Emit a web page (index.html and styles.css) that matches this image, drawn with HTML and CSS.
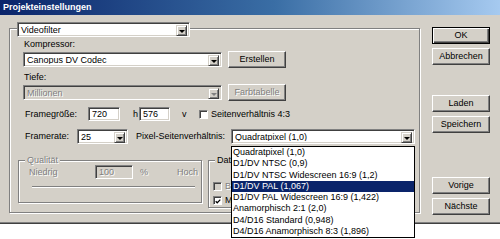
FILE: index.html
```html
<!DOCTYPE html>
<html lang="de">
<head>
<meta charset="utf-8">
<title>Projekteinstellungen</title>
<link rel="stylesheet" href="styles.css">
</head>
<body>
<div class="dialog">
  <div class="titlebar">Projekteinstellungen</div>
  <div class="content">
    <div class="maingroup">
      <div class="select head"><span class="val">Videofilter</span><span class="arrow"><i class="tri"></i></span></div>
      <div class="lbl lbl-komp">Kompressor:</div>
      <div class="row r1">
        <div class="select w199"><span class="val">Canopus DV Codec</span><span class="arrow"><i class="tri"></i></span></div>
        <div class="btn ml6">Erstellen</div>
      </div>
      <div class="lbl lbl-tiefe">Tiefe:</div>
      <div class="row r2">
        <div class="select w199 disabled"><span class="val dis">Millionen</span><span class="arrow"><i class="tri gray"></i></span></div>
        <div class="btn ml6 dis">Farbtabelle</div>
      </div>
      <div class="row r3">
        <span class="cap c-fg">Framegröße:</span>
        <span class="field w32">720</span>
        <span class="cap c-h">h</span>
        <span class="field w31 ml1">576</span>
        <span class="cap c-v">v</span>
        <span class="check c-seit"></span>
        <span class="cap c-seittext">Seitenverhältnis 4:3</span>
      </div>
      <div class="row r4">
        <span class="cap c-fr">Framerate:</span>
        <div class="select w51"><span class="val">25</span><span class="arrow"><i class="tri"></i></span></div>
        <span class="cap c-px">Pixel-Seitenverhältnis:</span>
        <div class="select w184"><span class="val">Quadratpixel (1,0)</span><span class="arrow"><i class="tri"></i></span></div>
      </div>
      <div class="groups">
        <div class="grp qual">
          <span class="legend dis">Qualität</span>
          <div class="row qrow">
            <span class="cap dis c-nied">Niedrig</span>
            <span class="field w38 fdis dis">100</span>
            <span class="cap dis c-pct">%</span>
            <span class="cap dis c-hoch">Hoch</span>
          </div>
          <div class="slider"></div>
        </div>
        <div class="grp dat">
          <span class="legend">Dat</span>
          <div class="row crow1"><span class="check cdis"></span><span class="cap dis c-cb">B</span></div>
          <div class="row crow2"><span class="check"><svg viewBox="0 0 7 7" width="7" height="7"><polyline points="0.8,3.2 2.6,5 6.2,1.4" fill="none" stroke="#000" stroke-width="1.4"/></svg></span><span class="cap c-cb">M</span></div>
        </div>
      </div>
    </div>
    <div class="buttons">
      <div class="btn default">OK</div>
      <div class="btn b-abb">Abbrechen</div>
      <div class="btn b-laden">Laden</div>
      <div class="btn b-spei">Speichern</div>
      <div class="btn b-vor">Vorige</div>
      <div class="btn b-nae">Nächste</div>
    </div>
  </div>
  <ul class="listbox">
    <li>Quadratpixel (1,0)</li>
    <li>D1/DV NTSC (0,9)</li>
    <li>D1/DV NTSC Widescreen 16:9 (1,2)</li>
    <li class="sel">D1/DV PAL (1,067)</li>
    <li>D1/DV PAL Widescreen 16:9 (1,422)</li>
    <li>Anamorphisch 2:1 (2,0)</li>
    <li>D4/D16 Standard (0,948)</li>
    <li>D4/D16 Anamorphisch 8:3 (1,896)</li>
  </ul>
</div>
</body>
</html>
```

FILE: styles.css
```css
html, body {
  margin: 0;
  padding: 0;
  background: #ffffff;
}
body {
  height: 239px;
  font-family: "Liberation Sans", Arial, sans-serif;
  font-size: 9px;
  color: #000;
}
.dialog {
  position: relative;
  width: 500px;
  height: 222px;
  background: #d4d0c8;
  border-bottom: 1px solid #808080;
  box-shadow: 0 1px 0 #404040;
}
.titlebar {
  height: 15px;
  line-height: 15px;
  padding-left: 3px;
  background: linear-gradient(to right, #0a246a, #3a6ea5 55%, #a6caf0);
  color: #fff;
  font-weight: bold;
  font-size: 9px;
}
.content {
  display: flex;
  align-items: flex-start;
}
.maingroup {
  box-sizing: border-box;
  margin: 13px 0 0 9px;
  width: 411px;
  height: 185px;
  border: 1px solid #808080;
  box-shadow: inset 1px 1px #fff, 1px 1px #fff;
  padding-left: 13px;
}
.select {
  box-sizing: border-box;
  display: flex;
  height: 15px;
  background: #fff;
  border: 1px solid;
  border-color: #808080 #fff #fff #808080;
  box-shadow: inset 1px 1px #404040, inset -1px -1px #d4d0c8;
  padding: 2px;
}
.select.disabled { background: #d4d0c8; }
.select .val {
  flex: 1;
  line-height: 11px;
  padding-left: 1px;
  white-space: nowrap;
  overflow: hidden;
}
.select .arrow {
  box-sizing: border-box;
  width: 11px;
  height: 11px;
  background: #d4d0c8;
  border: 1px solid;
  border-color: #d4d0c8 #404040 #404040 #d4d0c8;
  box-shadow: inset 1px 1px #fff, inset -1px -1px #808080;
  display: flex;
  align-items: center;
  justify-content: center;
}
.tri {
  display: block;
  width: 0;
  height: 0;
  border-left: 3px solid transparent;
  border-right: 3px solid transparent;
  border-top: 3px solid #000;
  margin-top: 1px;
}
.tri.gray { border-top-color: #808080; }
.head { margin: -7px 0 0 -6px; width: 173px; }
.w199 { width: 199px; }
.w51 { width: 51px; }
.w184 { width: 184px; }
.lbl { line-height: 11px; padding-left: 1px; }
.lbl-komp { margin-top: 2px; }
.lbl-tiefe { margin-top: 4px; }
.row { display: flex; align-items: center; }
.r1 { margin-top: 1px; }
.r2 { margin-top: 1px; }
.r3 { margin-top: 6px; height: 14px; }
.r4 { margin-top: 8px; height: 15px; }
.btn {
  box-sizing: border-box;
  width: 58px;
  height: 17px;
  line-height: 15px;
  text-align: center;
  background: #d4d0c8;
  border: 1px solid;
  border-color: #fff #404040 #404040 #fff;
  box-shadow: inset -1px -1px #808080;
  white-space: nowrap;
}
.btn.default {
  border-color: #000;
  box-shadow: inset 1px 1px #fff, inset -1px -1px #404040, inset -2px -2px #808080;
}
.ml6 { margin-left: 6px; }
.ml1 { margin-left: 1px; }
.dis { color: #808080; text-shadow: 1px 1px #fff; }
.cap { line-height: 11px; white-space: nowrap; }
.field {
  box-sizing: border-box;
  height: 14px;
  line-height: 12px;
  background: #fff;
  border: 1px solid;
  border-color: #808080 #fff #fff #808080;
  box-shadow: inset 1px 1px #404040, inset -1px -1px #d4d0c8;
  padding-left: 3px;
}
.field.fdis { background: #d4d0c8; }
.w32 { width: 32px; }
.w31 { width: 31px; }
.w38 { width: 38px; }
.c-fg { margin-left: 2px; width: 63px; }
.c-h { margin-left: 13px; width: 5px; }
.c-v { margin-left: 12px; width: 5px; }
.check {
  box-sizing: border-box;
  width: 9px;
  height: 9px;
  background: #fff;
  border: 1px solid;
  border-color: #808080 #fff #fff #808080;
  box-shadow: inset 1px 1px #404040;
  display: flex;
  align-items: center;
  justify-content: center;
  flex: none;
}
.check svg { display: block; margin: 1px 0 0 1px; }
.check.cdis { background: #d4d0c8; }
.c-seit { margin-left: 12px; }
.c-seittext { margin-left: 3px; }
.c-fr { margin-left: 2px; width: 52px; }
.c-px { margin-left: 8px; width: 95px; }
.groups { display: flex; margin-top: 16px; margin-left: -5px; }
.grp {
  box-sizing: border-box;
  border: 1px solid #808080;
  box-shadow: inset 1px 1px #fff, 1px 1px #fff;
}
.qual { width: 184px; height: 43px; }
.dat { width: 200px; height: 48px; margin-left: 6px; }
.legend {
  display: block;
  width: fit-content;
  margin-top: -6px;
  line-height: 11px;
  padding: 0 2px;
  background: #d4d0c8;
}
.qual .legend { margin-left: 6px; }
.dat .legend { margin-left: 6px; }
.qrow { margin-top: -1px; height: 14px; }
.c-nied { margin-left: 10px; width: 66px; }
.c-pct { margin-left: 7px; width: 37px; }
.slider {
  margin: 7px 0 0 13px;
  width: 163px;
  height: 0;
  border-top: 1px solid #808080;
  border-bottom: 1px solid #fff;
}
.crow1 { margin-top: 16px; margin-left: 4px; height: 9px; }
.crow2 { margin-top: 5px; margin-left: 4px; height: 9px; }
.c-cb { margin-left: 3px; }
.buttons {
  display: flex;
  flex-direction: column;
  margin: 12px 0 0 12px;
}
.b-abb { margin-top: 4px; }
.b-laden { margin-top: 30px; }
.b-spei { margin-top: 4px; }
.b-vor { margin-top: 44px; }
.b-nae { margin-top: 4px; }
.listbox {
  position: absolute;
  left: 231px;
  top: 146px;
  z-index: 5;
  box-sizing: border-box;
  width: 184px;
  height: 92px;
  margin: 0;
  padding: 0;
  list-style: none;
  background: #fff;
  border: 1px solid #000;
}
.listbox li {
  height: 11.25px;
  line-height: 11.25px;
  padding-left: 1px;
  white-space: nowrap;
  overflow: hidden;
}
.listbox li.sel {
  background: #0a246a;
  color: #fff;
}
```
